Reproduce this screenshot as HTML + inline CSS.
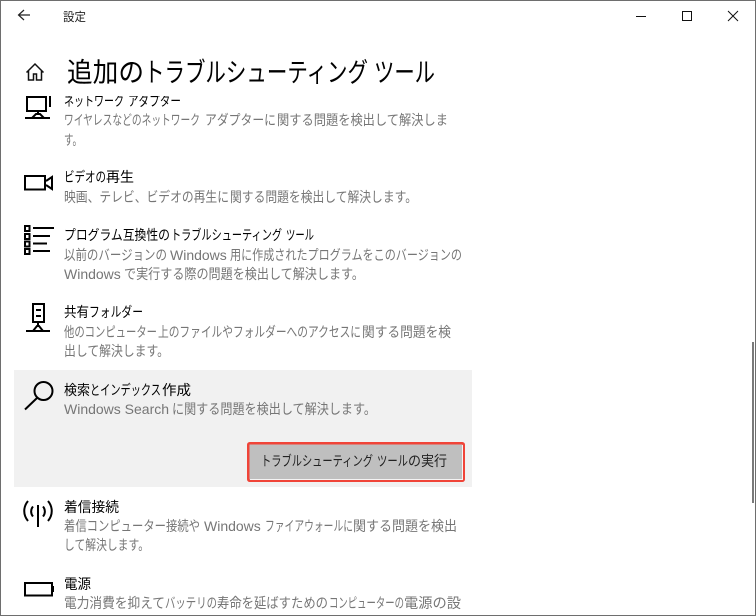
<!DOCTYPE html>
<html lang="ja">
<head>
<meta charset="utf-8">
<title>設定</title>
<style>
html,body{margin:0;padding:0;background:#fff;width:756px;height:616px;overflow:hidden}
svg{display:block}
text{font-family:"Liberation Sans","Noto Sans CJK JP",sans-serif;white-space:pre}
.t{font-size:14px;fill:#000}
.d{font-size:14px;fill:#767676}
.b{font-size:14px;fill:#222}
.h{font-size:27px;fill:#000}
.i{fill:none;stroke:#000;stroke-width:2}
</style>
</head>
<body>
<svg width="756" height="616" viewBox="0 0 756 616" xmlns="http://www.w3.org/2000/svg">
<defs><clipPath id="c"><rect x="0" y="96" width="756" height="520"/></clipPath></defs>
<rect width="756" height="616" fill="#fff"/>

<!-- title bar -->
<path d="M30 15H19M24 10l-5.500 5 5.500 5" fill="none" stroke="#222" stroke-width="1.200"/>
<text x="63" y="21" font-size="12" fill="#222" textLength="23" lengthAdjust="spacingAndGlyphs">設定</text>
<path d="M636 16.500H646" stroke="#111" stroke-width="1"/>
<rect x="682.500" y="11.500" width="9" height="9" fill="none" stroke="#111" stroke-width="1"/>
<path d="M728 11L738 21M738 11L728 21" stroke="#111" stroke-width="1"/>

<!-- header -->
<path d="M26.500 72.500L35 64l8.500 8.500M28.500 71v9h5v-6h3v6h5v-9" fill="none" stroke="#111" stroke-width="1.500"/>
<text class="h" x="67" y="82" textLength="77" lengthAdjust="spacingAndGlyphs">追加の</text>
<text class="h" x="144" y="82" textLength="224" lengthAdjust="spacingAndGlyphs">トラブルシューティング</text>
<text class="h" x="374" y="82" textLength="61" lengthAdjust="spacingAndGlyphs">ツール</text>

<g clip-path="url(#c)">
<!-- network -->
<rect x="27" y="97" width="19" height="14" class="i"/>
<path d="M50 96v11" class="i"/>
<path d="M25 118h25" class="i"/>
<path d="M38 111v3M32 118l4-4h4l4 4" class="i" stroke-width="1.500"/>
<text class="t" x="64" y="106" textLength="60" lengthAdjust="spacingAndGlyphs">ネットワーク</text>
<text class="t" x="128" y="106" textLength="53" lengthAdjust="spacingAndGlyphs">アダプター</text>
<text class="d" x="64" y="125" textLength="136" lengthAdjust="spacingAndGlyphs">ワイヤレスなどのネットワーク</text>
<text class="d" x="205" y="125" textLength="71" lengthAdjust="spacingAndGlyphs">アダプターに</text>
<text class="d" x="277" y="125" textLength="171" lengthAdjust="spacingAndGlyphs">関する問題を検出して解決しま</text>
<text class="d" x="64" y="145" textLength="18" lengthAdjust="spacingAndGlyphs">す。</text>

<!-- video -->
<rect x="25" y="176" width="20" height="13.500" class="i"/>
<path d="M46 181l6-4v12l-6-4" class="i"/>
<text class="t" x="64" y="182" textLength="42" lengthAdjust="spacingAndGlyphs">ビデオの</text>
<text class="t" x="106" y="182" textLength="28" lengthAdjust="spacingAndGlyphs">再生</text>
<text class="d" x="64" y="202" textLength="165" lengthAdjust="spacingAndGlyphs">映画、テレビ、ビデオの再生に</text>
<text class="d" x="230" y="202" textLength="187" lengthAdjust="spacingAndGlyphs">関する問題を検出して解決します。</text>

<!-- program compat -->
<g fill="none" stroke="#000" stroke-width="2">
<rect x="25" y="226" width="4.500" height="5"/>
<rect x="25" y="234" width="4.500" height="5"/>
<rect x="25" y="241.500" width="4.500" height="5"/>
<rect x="25" y="249" width="4.500" height="5"/>
<path d="M33 228h21M33 236h17M33 243.500h14M33 251h17"/>
</g>
<text class="t" x="64" y="240" textLength="106" lengthAdjust="spacingAndGlyphs">プログラム互換性の</text>
<text class="t" x="171" y="240" textLength="111" lengthAdjust="spacingAndGlyphs">トラブルシューティング</text>
<text class="t" x="286" y="240" textLength="28" lengthAdjust="spacingAndGlyphs">ツール</text>
<text class="d" x="64" y="260" textLength="103" lengthAdjust="spacingAndGlyphs">以前のバージョンの</text>
<text class="d" x="170" y="260">Windows</text>
<text class="d" x="230" y="260" textLength="232" lengthAdjust="spacingAndGlyphs">用に作成されたプログラムをこのバージョンの</text>
<text class="d" x="64" y="279">Windows</text>
<text class="d" x="124" y="279" textLength="240" lengthAdjust="spacingAndGlyphs">で実行する際の問題を検出して解決します。</text>

<!-- shared folder -->
<rect x="33" y="304" width="11" height="18" class="i"/>
<path d="M36 310h5M36 316h5" class="i"/>
<path d="M26 331h24" class="i"/>
<path d="M38 322v3M33 331l4-5h2l4 5" class="i" stroke-width="1.500"/>
<text class="t" x="64" y="317" textLength="25" lengthAdjust="spacingAndGlyphs">共有</text>
<text class="t" x="89" y="317" textLength="54" lengthAdjust="spacingAndGlyphs">フォルダー</text>
<text class="d" x="64" y="337" textLength="93" lengthAdjust="spacingAndGlyphs">他のコンピューター</text>
<text class="d" x="158" y="337" textLength="203" lengthAdjust="spacingAndGlyphs">上のファイルやフォルダーへのアクセスに</text>
<text class="d" x="362" y="337" textLength="89" lengthAdjust="spacingAndGlyphs">関する問題を検</text>
<text class="d" x="64" y="356" textLength="105" lengthAdjust="spacingAndGlyphs">出して解決します。</text>

<!-- search panel -->
<rect x="14" y="370" width="458" height="117" fill="#f1f1f1"/>
<circle cx="43.500" cy="391" r="9" class="i" stroke-width="1.700"/>
<path d="M37 398L25 409.500" class="i" stroke-width="1.700"/>
<text class="t" x="64" y="395" textLength="26" lengthAdjust="spacingAndGlyphs">検索</text>
<text class="t" x="90" y="395" textLength="71" lengthAdjust="spacingAndGlyphs">とインデックス</text>
<text class="t" x="162" y="395" textLength="29" lengthAdjust="spacingAndGlyphs">作成</text>
<text class="d" x="64" y="414">Windows Search</text>
<text class="d" x="172" y="414" textLength="204" lengthAdjust="spacingAndGlyphs">に関する問題を検出して解決します。</text>

<!-- button -->
<rect x="248.250" y="443.250" width="215.500" height="37.500" rx="1.500" fill="#bfbfbf" stroke="#f04438" stroke-width="2.500"/>
<path d="M250 479.500H462.500V445" fill="none" stroke="#f4f4f4" stroke-width="1"/>
<text class="b" x="261" y="466" textLength="112" lengthAdjust="spacingAndGlyphs">トラブルシューティング</text>
<text class="b" x="377" y="466" textLength="31" lengthAdjust="spacingAndGlyphs">ツール</text>
<text class="b" x="408" y="466" textLength="39" lengthAdjust="spacingAndGlyphs">の実行</text>

<!-- incoming -->
<path d="M38 505v22" class="i"/>
<path d="M33 506.500c-2.500 3-2.500 7 0 10M43 506.500c2.500 3 2.500 7 0 10" class="i" stroke-width="1.400"/>
<path d="M28 501c-5 6-5 14 0 20M48 501c5 6 5 14 0 20" class="i" stroke-width="1.400"/>
<text class="t" x="64" y="512" textLength="55" lengthAdjust="spacingAndGlyphs">着信接続</text>
<text class="d" x="64" y="531" textLength="136" lengthAdjust="spacingAndGlyphs">着信コンピューター接続や</text>
<text class="d" x="204" y="531">Windows</text>
<text class="d" x="265" y="531" textLength="88" lengthAdjust="spacingAndGlyphs">ファイアウォールに</text>
<text class="d" x="353" y="531" textLength="104" lengthAdjust="spacingAndGlyphs">関する問題を検出</text>
<text class="d" x="64" y="550" textLength="85" lengthAdjust="spacingAndGlyphs">して解決します。</text>

<!-- power -->
<rect x="25" y="583" width="27" height="12.500" class="i"/>
<rect x="52" y="586" width="2" height="6" fill="#000"/>
<text class="t" x="64" y="589" textLength="27" lengthAdjust="spacingAndGlyphs">電源</text>
<text class="d" x="64" y="608" textLength="101" lengthAdjust="spacingAndGlyphs">電力消費を抑えて</text>
<text class="d" x="165" y="608" textLength="52" lengthAdjust="spacingAndGlyphs">バッテリの</text>
<text class="d" x="217" y="608" textLength="111" lengthAdjust="spacingAndGlyphs">寿命を延ばすための</text>
<text class="d" x="329" y="608" textLength="75" lengthAdjust="spacingAndGlyphs">コンピューターの</text>
<text class="d" x="404" y="608" textLength="57" lengthAdjust="spacingAndGlyphs">電源の設</text>
</g>

<!-- scrollbar -->
<rect x="752" y="342" width="2" height="161" fill="#7a7a7a"/>

<!-- window border -->
<rect x="0" y="0" width="756" height="1" fill="#6e6e6e"/>
<rect x="0" y="0" width="1" height="616" fill="#6e6e6e"/>
<rect x="755" y="0" width="1" height="616" fill="#6e6e6e"/>
<rect x="0" y="615" width="756" height="1" fill="#6e6e6e"/>
</svg>
</body>
</html>
